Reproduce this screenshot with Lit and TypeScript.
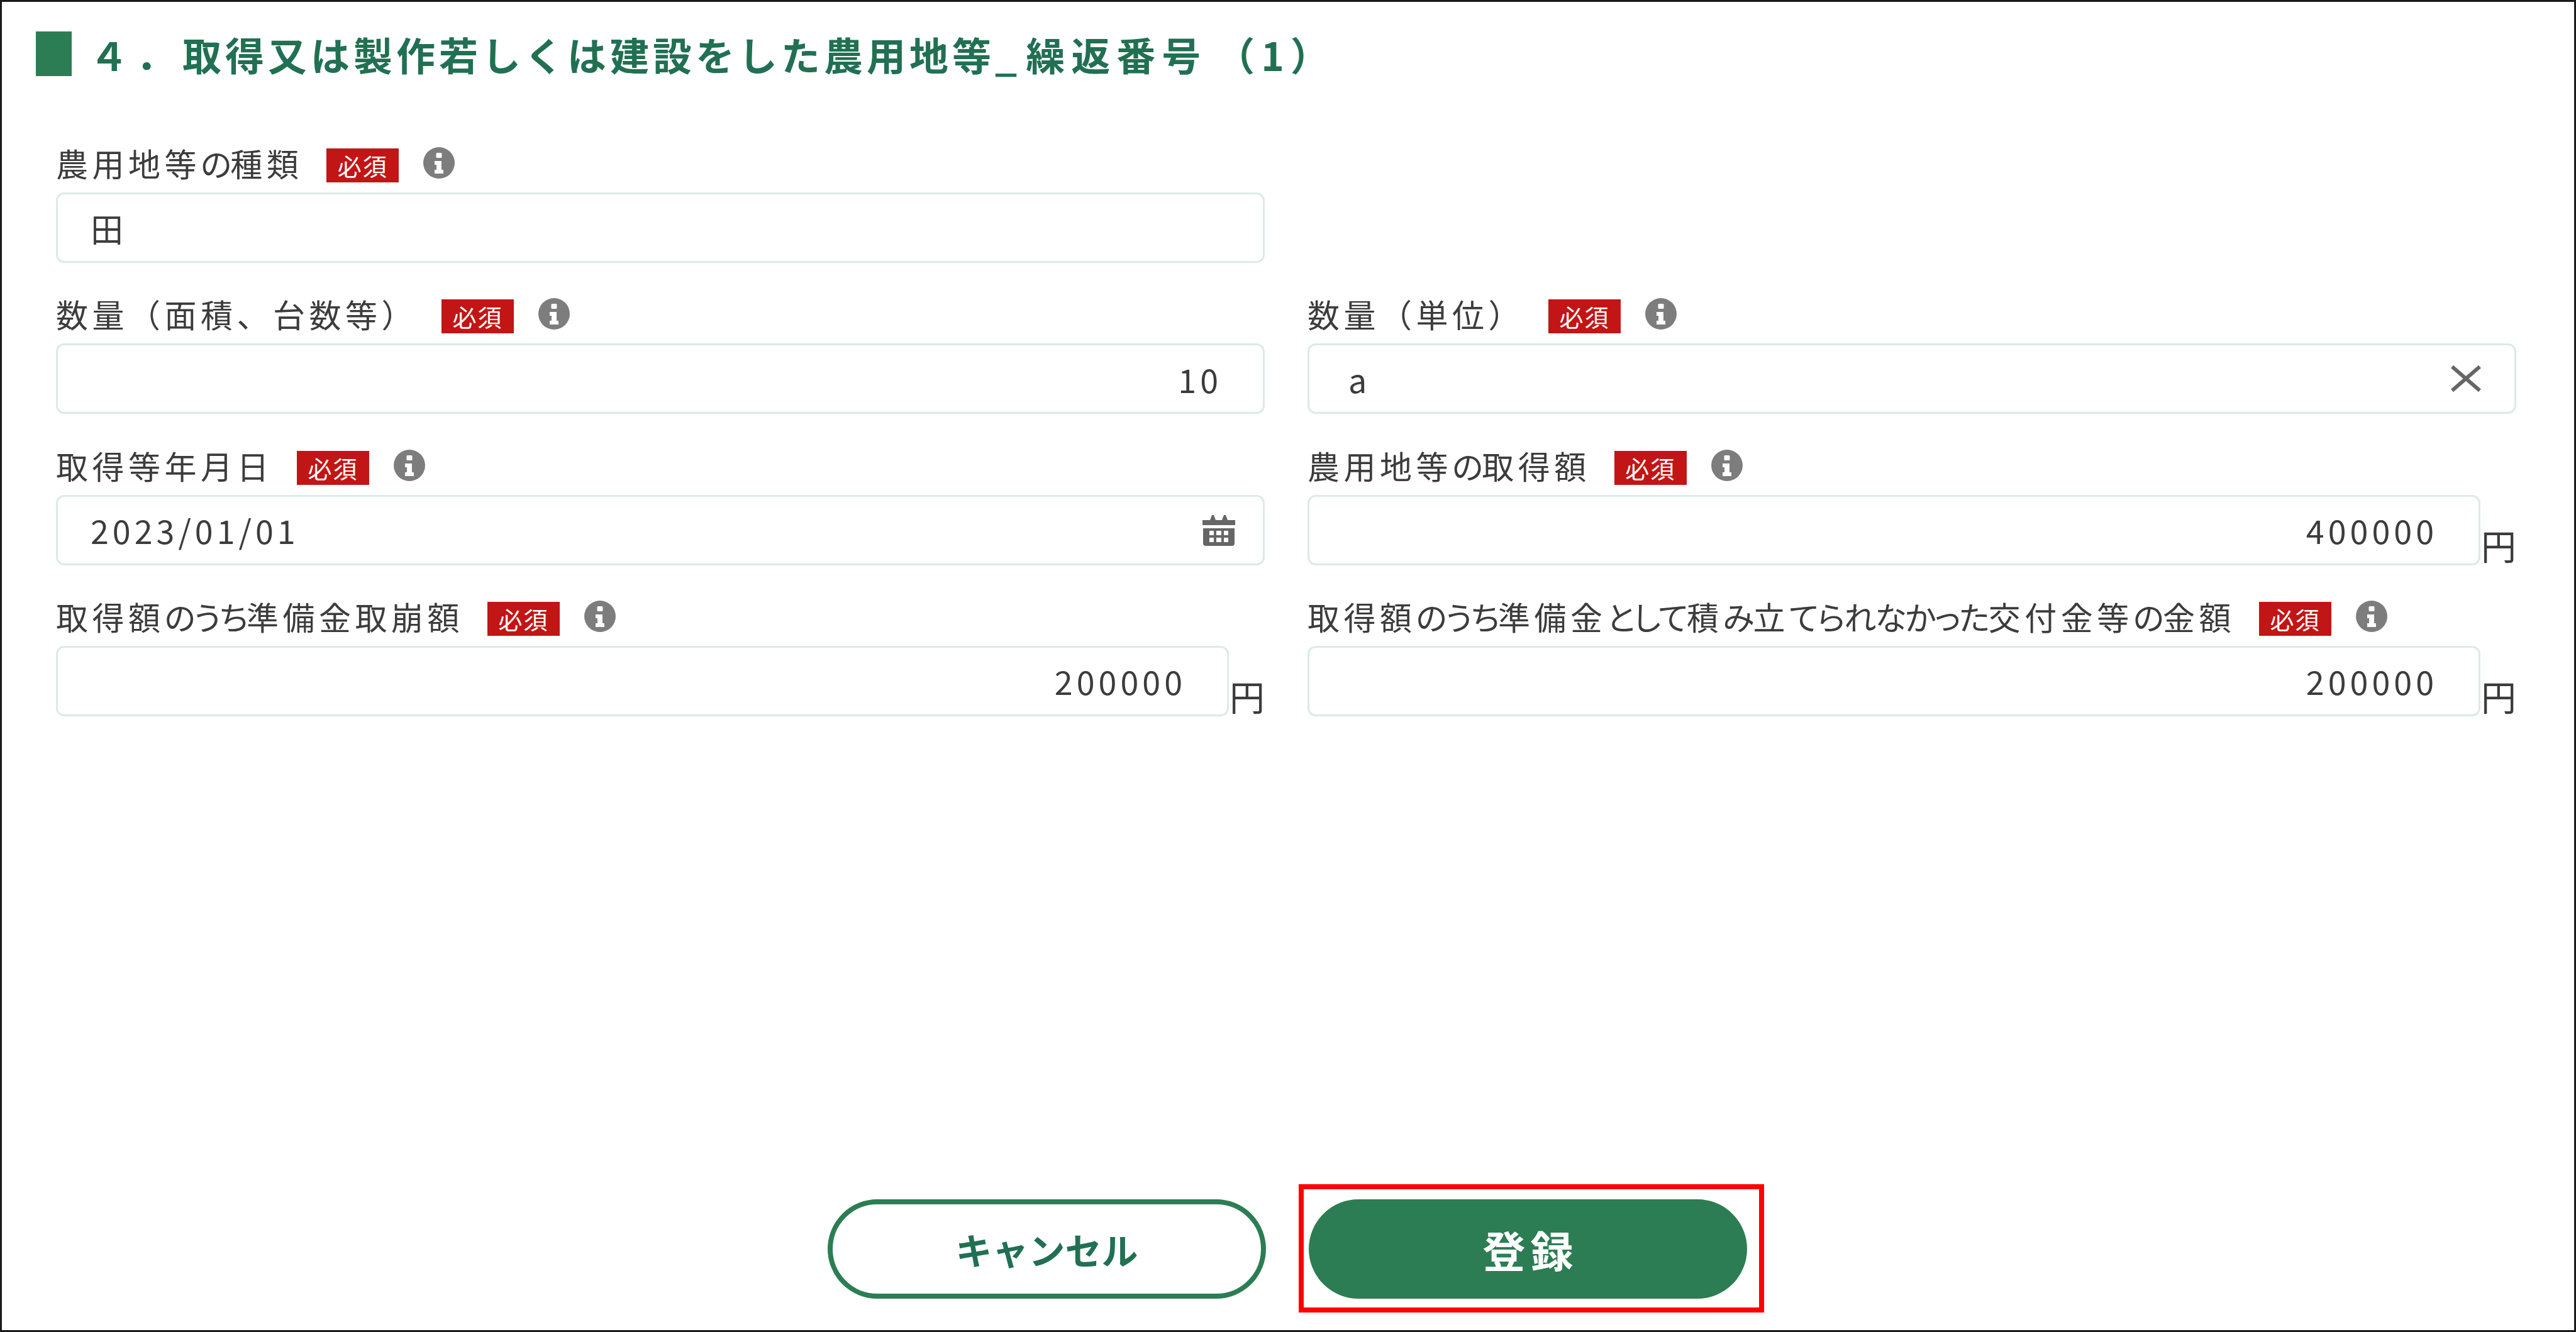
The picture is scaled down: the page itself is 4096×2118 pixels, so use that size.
import { LitElement, html, css, nothing } from "lit";
import { customElement } from "lit/decorators.js";

interface Field {
  label: string;
  value: string;
  align?: "right";
  icon?: "clear" | "calendar";
  unit?: boolean;
  spacer?: boolean;
}

const FIELDS: Field[] = [
  { label: "農用地等の種類", value: "田" },
  { label: "", value: "", spacer: true },
  { label: "数量（面積、台数等）", value: "10", align: "right" },
  { label: "数量（単位）", value: "a", icon: "clear" },
  { label: "取得等年月日", value: "2023/01/01", icon: "calendar" },
  { label: "農用地等の取得額", value: "400000", align: "right", unit: true },
  { label: "取得額のうち準備金取崩額", value: "200000", align: "right", unit: true },
  { label: "取得額のうち準備金として積み立てられなかった交付金等の金額", value: "200000", align: "right", unit: true },
];

@customElement("app-root")
export class AppRoot extends LitElement {
  static styles = css`
    :host {
      display: flex;
      flex-direction: column;
      box-sizing: border-box;
      height: 2118px;
      border: 3px solid #1a1a1a;
      background: #fff;
      font-family: "Noto Sans CJK JP", "Liberation Sans", sans-serif;
      color: #3c3c3c;
    }
    .title {
      display: flex;
      align-items: center;
      gap: 28px;
      margin: 47px 0 0 54px;
      height: 71px;
      font-size: 62px;
      letter-spacing: 6px;
      font-weight: 700;
      color: #217052;
      white-space: nowrap;
    }
    .bar {
      width: 57px;
      height: 71px;
      background: #2c7d54;
    }
    .t-num {
      letter-spacing: 12px;
    }
    .t-us {
      letter-spacing: 14px;
    }
    .t-tail {
      letter-spacing: 10px;
    }
    .t-paren {
      margin-left: 14px;
      letter-spacing: 10px;
    }
    .form {
      display: grid;
      grid-template-columns: 1922px 1922px;
      column-gap: 68px;
      row-gap: 64.3px;
      margin: 121px 0 0 86px;
    }
    .label {
      display: flex;
      align-items: flex-start;
      height: 64px;
      font-size: 51px;
      letter-spacing: 6.5px;
      line-height: 46px;
      white-space: nowrap;
    }
    .label-text {
      margin-top: -6px;
    }
    .kana {
      font-feature-settings: "palt";
      letter-spacing: -2px;
    }
    .badge {
      display: flex;
      align-items: center;
      justify-content: center;
      width: 115px;
      height: 54px;
      margin: -6px 0 0 38px;
      background: #c21515;
      color: #fff;
      font-size: 38px;
      letter-spacing: 2px;
      line-height: 54px;
    }
    .info {
      display: block;
      width: 52px;
      height: 52px;
      margin: -9px 0 0 38px;
    }
    .row {
      display: flex;
      align-items: flex-end;
    }
    .box {
      flex: 1;
      display: flex;
      align-items: center;
      justify-content: space-between;
      box-sizing: border-box;
      height: 112px;
      padding: 0 52px;
      border: 3px solid #dcebe4;
      border-radius: 13px;
      font-size: 52px;
      letter-spacing: 6px;
    }
    .box.right {
      justify-content: flex-end;
      padding-right: 65px;
    }
    .box.clear {
      padding-right: 52px;
      padding-left: 62px;
    }
    .box.calendar {
      padding-right: 44px;
    }
    .unit {
      width: 57px;
      font-size: 56px;
      line-height: 66px;
      text-align: right;
      white-space: nowrap;
    }
    .icon {
      display: block;
      flex: none;
    }
    .actions {
      display: flex;
      justify-content: center;
      gap: 68px;
      margin-top: auto;
      padding: 0 2px 50px 0;
    }
    .btn {
      position: relative;
      display: flex;
      align-items: center;
      justify-content: center;
      box-sizing: border-box;
      width: 697px;
      height: 158px;
      border: 8px solid #2c7d54;
      border-radius: 79px;
      font-size: 58px;
      font-weight: 700;
      white-space: nowrap;
    }
    .cancel {
      background: #fff;
      color: #217052;
    }
    .submit {
      background: #2c7d54;
      color: #fff;
      font-size: 68px;
      letter-spacing: 8px;
      padding-left: 8px;
    }
    .highlight {
      position: absolute;
      top: -32px;
      right: -35px;
      bottom: -30px;
      left: -24px;
      border: 8px solid #ff0000;
    }
  `;

  private infoIcon() {
    return html`<svg class="info" viewBox="0 0 52 52" aria-hidden="true">
      <circle cx="26" cy="26" r="25" fill="#7d7d7d"></circle>
      <rect x="21.5" y="10" width="9" height="8" rx="1.5" fill="#fff"></rect>
      <path d="M19 23h11v14h3v6H19v-6h3v-8h-3z" fill="#fff"></path>
    </svg>`;
  }

  private clearIcon() {
    return html`<svg class="icon" width="50" height="42" viewBox="0 0 50 42" aria-hidden="true">
      <path d="M3 2L47 40M47 2L3 40" stroke="#666" stroke-width="6" fill="none"></path>
    </svg>`;
  }

  private calendarIcon() {
    return html`<svg class="icon" width="52" height="50" viewBox="0 0 52 50" aria-hidden="true">
      <path fill="#666" fill-rule="evenodd" d="M0 9h12l3-8h3l3 8h10l3-8h3l3 8h12v8H0z"></path>
      <path fill="#666" fill-rule="evenodd"
        d="M1 22h50v24q0 4-4 4H5q-4 0-4-4z
           M11 26h7v7h-7z M22 26h8v7h-8z M34 26h7v7h-7z
           M11 37h7v7h-7z M22 37h8v7h-8z M34 37h7v7h-7z"></path>
    </svg>`;
  }

  private labelParts(text: string) {
    return text
      .split(/([\u3040-\u309f]+)/)
      .map((part, i) => (i % 2 ? html`<span class="kana">${part}</span>` : part));
  }

  private field(f: Field) {
    if (f.spacer) return html`<div></div>`;
    const cls = ["box", f.align ?? "", f.icon ?? ""].join(" ");
    return html`<div>
      <div class="label">
        <span class="label-text">${this.labelParts(f.label)}</span>
        <span class="badge">必須</span>
        ${this.infoIcon()}
      </div>
      <div class="row">
        <div class=${cls}>
          <span>${f.value}</span>
          ${f.icon === "clear" ? this.clearIcon() : nothing}
          ${f.icon === "calendar" ? this.calendarIcon() : nothing}
        </div>
        ${f.unit ? html`<span class="unit">円</span>` : nothing}
      </div>
    </div>`;
  }

  render() {
    return html`
      <div class="title">
        <span class="bar"></span>
        <span><span class="t-num">４．</span>取得又は製作若しくは建設をした農用地等<span class="t-us">_</span><span class="t-tail">繰返番号</span><span class="t-paren">（1）</span></span>
      </div>
      <div class="form">${FIELDS.map((f) => this.field(f))}</div>
      <div class="actions">
        <div class="btn cancel">キャンセル</div>
        <div class="btn submit">登録<span class="highlight"></span></div>
      </div>
    `;
  }
}
